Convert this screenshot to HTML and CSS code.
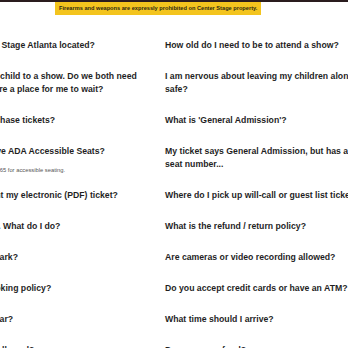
FILE: index.html
```html
<!DOCTYPE html>
<html lang="en">
<head>
<meta charset="utf-8">
<title>FAQ</title>
<link rel="stylesheet" href="styles.css">
</head>
<body>
<div class="topbar"></div>
<div class="notice">Firearms and weapons are expressly prohibited on Center Stage property.</div>
<main class="faq">
  <div class="q">Where is Center Stage Atlanta located?</div>
  <div class="q">How old do I need to be to attend a show?</div>

  <div class="q">I’m bringing my child to a show. Do we both need tickets, or is there a place for me to wait?</div>
  <div class="q">I am nervous about leaving my children alone. Is it safe?</div>

  <div class="q">When can I purchase tickets?</div>
  <div class="q">What is 'General Admission'?</div>

  <div class="q">How will I reserve ADA Accessible Seats?<p class="note">Please phone 404-885-1365 for accessible seating.</p></div>
  <div class="q">My ticket says General Admission, but has a listed seat number...</div>

  <div class="q">Where can I print my electronic (PDF) ticket?</div>
  <div class="q">Where do I pick up will-call or guest list tickets?</div>

  <div class="q">I lost my ticket... What do I do?</div>
  <div class="q">What is the refund / return policy?</div>

  <div class="q">Where would I park?</div>
  <div class="q">Are cameras or video recording allowed?</div>

  <div class="q">What is our smoking policy?</div>
  <div class="q">Do you accept credit cards or have an ATM?</div>

  <div class="q">Do you have a bar?</div>
  <div class="q">What time should I arrive?</div>

  <div class="q">What items are allowed?</div>
  <div class="q">Do you serve food?</div>
</main>
</body>
</html>
```
FILE: styles.css
```css
html, body {
  margin: 0;
  padding: 0;
  overflow: hidden;
  background: #ffffff;
}

body {
  font-family: "Liberation Sans", Arial, sans-serif;
  color: #1f1f1f;
}

.topbar {
  height: 2px;
  background: #2a1c1e;
}

.notice {
  margin-left: 55px;
  width: fit-content;
  height: 13px;
  padding: 0 4px;
  background: #f3c41e;
  color: #2e2a12;
  font-size: 5.65px;
  font-weight: bold;
  line-height: 13px;
  white-space: nowrap;
}

.faq {
  display: grid;
  grid-template-columns: 210px 218px;
  column-gap: 22px;
  row-gap: 18px;
  margin-top: 24px;
  margin-left: -67px;
  width: max-content;
}

.q {
  font-size: 8.7px;
  font-weight: bold;
  line-height: 13px;
}

.note {
  margin: 9px 0 -8px;
  font-size: 5.8px;
  font-weight: normal;
  line-height: 7px;
  color: #555555;
  white-space: nowrap;
}
```
